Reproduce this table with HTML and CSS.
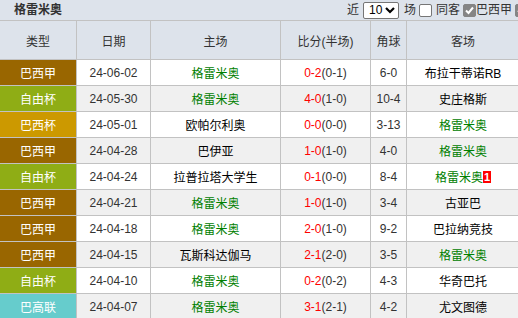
FILE: index.html
```html
<!DOCTYPE html>
<html lang="zh-CN">
<head>
<meta charset="utf-8">
<title>格雷米奥</title>
<link rel="stylesheet" href="styles.css">
</head>
<body>
<div class="page">
  <div class="topbar">
    <span class="title">格雷米奥</span>
    <div class="controls">
      <span class="lbl">近</span>
      <span class="select">10<svg class="chev" width="10" height="7" viewBox="0 0 10 7"><polyline points="1,1 5,5 9,1" fill="none" stroke="#000" stroke-width="2.2"/></svg></span>
      <span class="lbl">场</span>
      <span class="cb"></span>
      <span class="lbl">同客</span>
      <span class="cb on"><svg width="13" height="13" viewBox="0 0 13 13"><polyline points="3,6.5 5.5,9 10,3.5" fill="none" stroke="#fff" stroke-width="2"/></svg></span>
      <span class="lbl tight">巴西甲</span>
      <span class="cb on"><svg width="13" height="13" viewBox="0 0 13 13"><polyline points="3,6.5 5.5,9 10,3.5" fill="none" stroke="#fff" stroke-width="2"/></svg></span>
    </div>
  </div>
  <div class="table">
    <div class="row head">
      <div class="c">类型</div><div class="c">日期</div><div class="c">主场</div><div class="c">比分(半场)</div><div class="c">角球</div><div class="c">客场</div>
    </div>
    <div class="row">
      <div class="c type t-bxj">巴西甲</div><div class="c">24-06-02</div><div class="c g">格雷米奥</div><div class="c"><span class="r">0-2</span>(0-1)</div><div class="c">6-0</div><div class="c k">布拉干蒂诺RB</div>
    </div>
    <div class="row alt">
      <div class="c type t-zyb">自由杯</div><div class="c">24-05-30</div><div class="c g">格雷米奥</div><div class="c"><span class="r">4-0</span>(1-0)</div><div class="c">10-4</div><div class="c k">史庄格斯</div>
    </div>
    <div class="row">
      <div class="c type t-bxb">巴西杯</div><div class="c">24-05-01</div><div class="c k">欧帕尔利奥</div><div class="c"><span class="r">0-0</span>(0-0)</div><div class="c">3-13</div><div class="c g">格雷米奥</div>
    </div>
    <div class="row alt">
      <div class="c type t-bxj">巴西甲</div><div class="c">24-04-28</div><div class="c k">巴伊亚</div><div class="c"><span class="r">1-0</span>(1-0)</div><div class="c">4-0</div><div class="c g">格雷米奥</div>
    </div>
    <div class="row">
      <div class="c type t-zyb">自由杯</div><div class="c">24-04-24</div><div class="c k">拉普拉塔大学生</div><div class="c"><span class="r">0-1</span>(0-0)</div><div class="c">8-4</div><div class="c g">格雷米奥<span class="badge">1</span></div>
    </div>
    <div class="row alt">
      <div class="c type t-bxj">巴西甲</div><div class="c">24-04-21</div><div class="c g">格雷米奥</div><div class="c"><span class="r">1-0</span>(1-0)</div><div class="c">3-4</div><div class="c k">古亚巴</div>
    </div>
    <div class="row">
      <div class="c type t-bxj">巴西甲</div><div class="c">24-04-18</div><div class="c g">格雷米奥</div><div class="c"><span class="r">2-0</span>(1-0)</div><div class="c">9-2</div><div class="c k">巴拉纳竞技</div>
    </div>
    <div class="row alt">
      <div class="c type t-bxj">巴西甲</div><div class="c">24-04-15</div><div class="c k">瓦斯科达伽马</div><div class="c"><span class="r">2-1</span>(2-0)</div><div class="c">3-5</div><div class="c g">格雷米奥</div>
    </div>
    <div class="row">
      <div class="c type t-zyb">自由杯</div><div class="c">24-04-10</div><div class="c g">格雷米奥</div><div class="c"><span class="r">0-2</span>(0-2)</div><div class="c">4-3</div><div class="c k">华奇巴托</div>
    </div>
    <div class="row alt">
      <div class="c type t-bgl">巴高联</div><div class="c">24-04-07</div><div class="c g">格雷米奥</div><div class="c"><span class="r">3-1</span>(2-1)</div><div class="c">4-2</div><div class="c k">尤文图德</div>
    </div>
  </div>
</div>
</body>
</html>
```
FILE: styles.css
```css
html, body {
  margin: 0;
  padding: 0;
  overflow: hidden;
  background: #fff;
}
body {
  font-family: "Liberation Sans", "Noto Sans CJK SC", sans-serif;
  font-size: 12px;
  color: #333;
}
.page {
  width: 520px;
  overflow: hidden;
}
.topbar {
  height: 20px;
  background: #dde3eb;
  border-bottom: 1px solid #c2c2c2;
  display: flex;
  align-items: center;
  padding-left: 14px;
}
.title {
  font-weight: bold;
  color: #333;
  line-height: 20px;
}
.controls {
  display: flex;
  align-items: center;
  margin-left: auto;
  margin-right: -8px;
  flex-shrink: 0;
  color: #333;
}
.lbl {
  line-height: 20px;
  white-space: nowrap;
}
.select {
  display: flex;
  align-items: center;
  box-sizing: border-box;
  width: 36px;
  height: 17px;
  margin: 0 5px 0 4px;
  padding-left: 5px;
  background: #fff;
  border: 1px solid #767676;
  border-radius: 2px;
  color: #000;
  line-height: 15px;
}
.chev {
  margin-left: 3px;
}
.cb {
  box-sizing: border-box;
  width: 13px;
  height: 13px;
  margin: 0 4px 0 3px;
  background: #fff;
  border: 1px solid #767676;
  border-radius: 2px;
  display: flex;
}
.cb.on {
  background: #858585;
  border-color: #858585;
  margin-right: 0;
}
.cb.on svg {
  margin: -1px;
}
.table {
  width: 520px;
}
.row {
  display: grid;
  grid-template-columns: 77px 74px 130px 90px 36px 1fr;
  height: 26px;
  background: #fff;
}
.row.alt {
  background: #f0f0f0;
}
.row.head {
  height: 39px;
  background: #dde3eb;
}
.c {
  box-sizing: border-box;
  border-right: 1px solid #c2c2c2;
  border-bottom: 1px solid #c2c2c2;
  display: flex;
  align-items: center;
  justify-content: center;
  white-space: nowrap;
  color: #333;
}
.c.type {
  color: #fff;
}
.t-bxj { background: #996600; }
.t-zyb { background: #8fad15; }
.t-bxb { background: #cc9900; }
.t-bgl { background: #66cccc; }
.g { color: #008000; }
.k { color: #000; }
.r { color: #ff0000; }
.badge {
  background: #ff0000;
  color: #fff;
  font-weight: bold;
  font-size: 11px;
  line-height: 12px;
  padding: 0 1px;
}
```
